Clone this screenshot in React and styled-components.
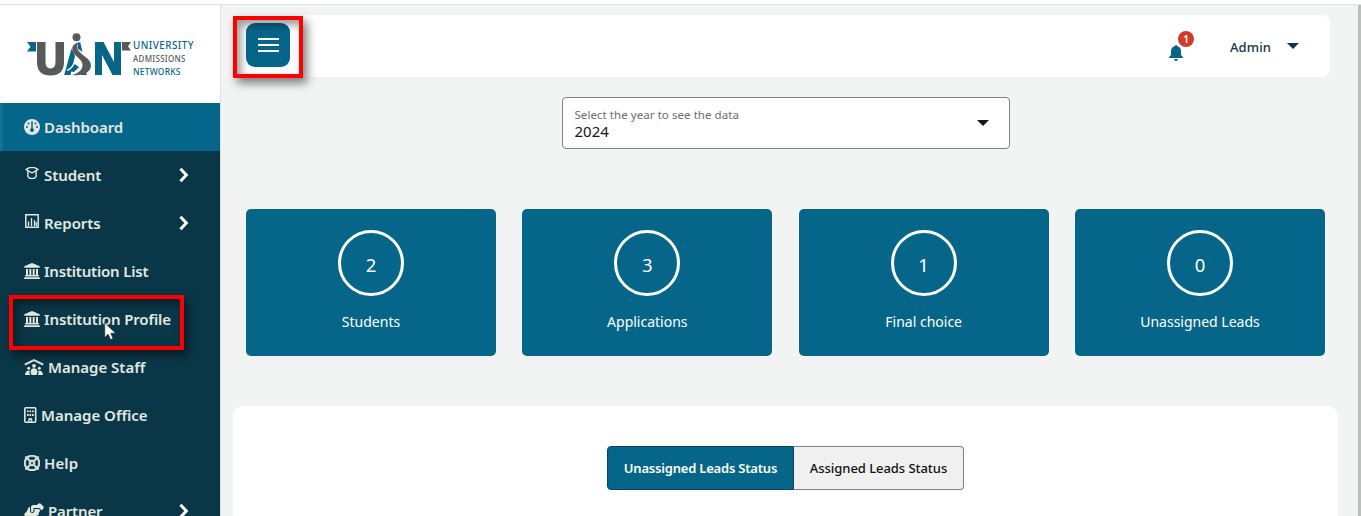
import React from "react";
import styled, { createGlobalStyle } from "styled-components";
import { FaGauge, FaRegLifeRing, FaHandshakeAngle } from "react-icons/fa6";

const teal = "#066689";
const navy = "#0a3747";

const GlobalStyle = createGlobalStyle`
  * { box-sizing: border-box; }
  body {
    margin: 0;
    overflow: hidden;
    font-family: "Noto Sans", "Open Sans", sans-serif;
    background: #f1f4f3;
  }
`;

const Page = styled.div`
  display: flex;
  flex-direction: column;
  height: 516px;
  overflow: hidden;
`;

const TopEdge = styled.div`
  flex: none;
  height: 5px;
  background: #fff;
  border-bottom: 1px solid #dfe1e1;
`;

const Body = styled.div`
  display: flex;
  flex: 1;
  min-height: 0;
`;

const Sidebar = styled.aside`
  flex: none;
  width: 221px;
  overflow: hidden;
  background: ${navy};
  border-right: 1px solid #dde1e1;
`;

const LogoArea = styled.div`
  display: flex;
  align-items: flex-start;
  height: 98px;
  padding: 26px 0 0 26px;
  background: #fff;
`;

const LogoWords = styled.div`
  display: flex;
  flex-direction: column;
  margin: 8px 0 0 1px;
  line-height: 13px;
  font-weight: 500;
`;

const LogoWord = styled.span`
  height: 13px;
  white-space: nowrap;
  color: ${(p) => p.$color};
  font-size: ${(p) => p.$size}px;
  letter-spacing: ${(p) => p.$spacing}px;
`;

const NavItem = styled.div`
  position: relative;
  display: flex;
  align-items: center;
  height: 48px;
  padding: 0 31px 0 ${(p) => (p.$active ? 21 : 24)}px;
  color: #e2e8e0;
  background: ${(p) => (p.$active ? teal : "transparent")};
  border-left: ${(p) => (p.$active ? "3px solid #0f739a" : "0")};
`;

const NavIcon = styled.span`
  display: flex;
  flex: none;
  margin-right: 4px;
  margin-top: ${(p) => p.$shift || 0}px;
  svg { display: block; }
`;

const NavLabel = styled.span`
  flex: 1;
  padding-bottom: 1px;
  font-size: 15px;
  line-height: 20px;
  font-weight: 600;
  white-space: nowrap;
  letter-spacing: ${(p) => p.$spacing}px;
`;

const Highlight = styled.div`
  position: absolute;
  z-index: 3;
  left: ${(p) => p.$left}px;
  top: ${(p) => p.$top}px;
  width: ${(p) => p.$width}px;
  height: ${(p) => p.$height}px;
  border: 4px solid #fe0000;
  box-shadow: 4px 5px 9px rgba(0, 0, 0, 0.5), inset 4px 5px 9px rgba(0, 0, 0, 0.4);
`;

const Pointer = styled.svg`
  position: absolute;
  z-index: 4;
  left: 104px;
  top: 27px;
`;

const Main = styled.main`
  flex: 1;
  min-width: 0;
  padding: 10px 20px 0 12px;
`;

const Header = styled.header`
  position: relative;
  display: flex;
  align-items: center;
  height: 62px;
  margin-right: 8px;
  padding: 0 31px 0 13px;
  background: #fff;
  border-radius: 8px;
`;

const MenuButton = styled.div`
  display: flex;
  flex-direction: column;
  justify-content: center;
  align-items: center;
  gap: 4px;
  width: 44px;
  height: 44px;
  margin-top: -2px;
  border-radius: 9px;
  background: ${teal};
`;

const MenuBar = styled.span`
  width: 21px;
  height: 2px;
  background: #fff;
`;

const Spacer = styled.div`
  flex: 1;
`;

const Bell = styled.div`
  position: relative;
  width: 14px;
  height: 16px;
  margin: 13px 47px 0 0;
  svg { display: block; }
`;

const Badge = styled.span`
  position: absolute;
  left: 9px;
  top: -14px;
  width: 16px;
  height: 16px;
  border-radius: 50%;
  background: #cf3b28;
  color: #fff;
  font-size: 10px;
  line-height: 16px;
  font-weight: 600;
  text-align: center;
`;

const UserName = styled.span`
  width: 57px;
  padding-top: 2px;
  font-size: 13px;
  line-height: 18px;
  font-weight: 500;
  color: #153846;
  letter-spacing: 0.1px;
`;

const Caret = styled.span`
  border-left: 6px solid transparent;
  border-right: 6px solid transparent;
  border-top: 6px solid ${(p) => p.$color};
`;

const YearSelect = styled.div`
  display: flex;
  align-items: center;
  justify-content: space-between;
  width: 448px;
  height: 52px;
  margin: 20px auto 0;
  padding: 0 20px 0 12px;
  background: #fff;
  border: 1px solid #7f8182;
  border-radius: 4px;
`;

const SelectText = styled.div`
  display: flex;
  flex-direction: column;
`;

const SelectLabel = styled.span`
  font-size: 11.5px;
  line-height: 15px;
  color: #6b6d6e;
  letter-spacing: 0.06px;
`;

const SelectValue = styled.span`
  font-size: 15px;
  line-height: 18px;
  color: #161616;
`;

const Cards = styled.section`
  display: grid;
  grid-template-columns: repeat(4, 250px);
  justify-content: space-between;
  margin: 60px 13px 0 13px;
`;

const Card = styled.div`
  display: flex;
  flex-direction: column;
  align-items: center;
  height: 147px;
  padding-top: 21px;
  color: #fff;
  background: ${teal};
  border-radius: 5px;
`;

const Count = styled.div`
  width: 66px;
  height: 66px;
  border: 3px solid #fff;
  border-radius: 50%;
  font-size: 18.5px;
  line-height: 64px;
  text-align: center;
`;

const CardLabel = styled.span`
  margin-top: 16px;
  font-size: 14px;
  line-height: 20px;
`;

const Panel = styled.section`
  display: flex;
  justify-content: center;
  align-items: flex-start;
  height: 130px;
  margin-top: 50px;
  padding-top: 40px;
  background: #fff;
  border-radius: 10px 10px 0 0;
`;

const Tab = styled.div`
  width: ${(p) => p.$width}px;
  height: 44px;
  border: 1px solid ${(p) => (p.$active ? "#064a62" : "#7f8182")};
  border-left-width: ${(p) => (p.$active ? 1 : 0)}px;
  border-radius: ${(p) => (p.$active ? "4px 0 0 4px" : "0 4px 4px 0")};
  background: ${(p) => (p.$active ? teal : "#f0f0f0")};
  color: ${(p) => (p.$active ? "#fff" : "#111")};
  font-size: 13px;
  font-weight: ${(p) => (p.$active ? 600 : 500)};
  line-height: 43px;
  text-align: center;
  white-space: nowrap;
  letter-spacing: ${(p) => p.$spacing}px;
`;

const ScrollEdge = styled.div`
  flex: none;
  width: 3px;
  background: #bcbeb9;
`;

function LogoMark() {
  return (
    <svg width="106" height="46" viewBox="26 31 106 46">
      <path d="M27 42h9v9.500h-9l3.500-4.700z" fill={teal} />
      <path d="M37 42h8.500v19.500q0 7 5 7t5-7V42H64v20q0 13.500-13.500 13.500T37 62z" fill="#58595b" />
      <path d="M71.500 48.500l3.500 7.500-4.500 19h-6.300z" fill={teal} />
      <path d="M78 42.500h2.300l2.200 9.500-5-3.500z" fill={teal} />
      <path d="M73 63l6 4-5 5-5-1z" fill={teal} />
      <path d="M80 75l6-3.500.8 3.500z" fill={teal} />
      <circle cx="76.500" cy="37.200" r="4" fill="#58595b" />
      <path d="M79 42.500c-5 .5-7.500 4-6.500 8 1.200 5.500 9.500 8 10 14 .3 5-3.500 8.500-10.500 10.500 11 1.500 19-3 19-9.500 0-7.500-11-10.500-13.500-16.500-1-2.500-.5-4.500 1.500-6.500z" fill="#58595b" />
      <path d="M67 70.500q6-2 8.500-11" fill="none" stroke="#fff" strokeWidth="1.300" />
      <path d="M95 42h8.500l10.500 20V42h7v33h-8.500l-10.500-20v20h-7z" fill={teal} />
      <path d="M122 42h9l-3 4.200 3 4.300h-9z" fill="#58595b" />
    </svg>
  );
}

function CapIcon() {
  return (
    <svg width="16" height="14" viewBox="0 0 16 14" fill="none" stroke="currentColor" strokeWidth="1.400" strokeLinejoin="round">
      <path d="M2 3.300L5.500 1.600h5L14 3.300 10.500 5.600 8 6.800 5.500 5.600z" />
      <path d="M3.900 4.800v5.700l2 1.900h4.200l2-1.900V4.800" />
    </svg>
  );
}

function ReportIcon() {
  return (
    <svg width="16" height="16" viewBox="0 0 16 16" fill="none" stroke="currentColor" strokeWidth="1.500">
      <path d="M1.800 1.800h12.400v12.400H1.800z" />
      <path d="M4.500 8.500V13M7.500 5v8M10.500 7v6M12.300 9v4" strokeWidth="1.300" />
    </svg>
  );
}

function InstitutionIcon() {
  return (
    <svg width="16" height="16" viewBox="0 0 16 16" fill="currentColor">
      <path d="M8 0l7.700 3.200v1.500H.3V3.200z" />
      <path d="M2 6h2v6H2zM5.300 6h2v6h-2zM8.700 6h2v6h-2zM12 6h2v6h-2zM1.200 12h13.600v1.500H1.200zM.2 14.200h15.600V16H.2z" />
    </svg>
  );
}

function StaffIcon() {
  return (
    <svg width="20" height="16" viewBox="0 0 20 16" fill="currentColor">
      <path d="M.8 5.600L10 1.200l9.200 4.400" fill="none" stroke="currentColor" strokeWidth="2" />
      <circle cx="10" cy="6.800" r="1.900" />
      <circle cx="4.700" cy="9.200" r="1.500" />
      <circle cx="15.300" cy="9.200" r="1.500" />
      <path d="M6.500 13q.5-3.700 3.500-3.700t3.500 3.700l-1 3h-5zM1 16q.3-4.300 3.700-4.300 1 0 1.300.4l-.7 1.700 1 2.200zM19 16q-.3-4.300-3.700-4.300-1 0-1.300.4l.7 1.700-1 2.200z" />
    </svg>
  );
}

function OfficeIcon() {
  return (
    <svg width="13" height="16" viewBox="0 0 13 16">
      <rect x=".8" y=".8" width="10.900" height="14.400" rx="1" fill="none" stroke="currentColor" strokeWidth="1.600" />
      <path d="M3 3.400h1.700v1.900H3zM5.500 3.400h1.700v1.900H5.500zM8 3.400h1.700v1.900H8zM3 7h1.700v1.900H3zM5.500 7h1.700v1.900H5.500zM8 7h1.700v1.900H8zM4.300 15.500v-3.300q0-1.300 2-1.300t2 1.300v3.300H6.900v-2.700H5.700v2.700z" fill="currentColor" />
    </svg>
  );
}

function Chevron() {
  return (
    <svg width="10" height="16" viewBox="0 0 10 16">
      <path d="M1.500 1.800L7.300 8l-5.800 6.200" fill="none" stroke="#fff" strokeWidth="3" />
    </svg>
  );
}

function BellIcon() {
  return (
    <svg width="14" height="16" viewBox="0 0 14 16" fill={teal}>
      <path d="M7 0q1 0 1 1.100C11 1.700 12 4 12 6.500V10l2 2.300V13H0v-.7L2 10V6.500C2 4 3 1.700 6 1.100Q6 0 7 0zM5 14h4q-.3 2-2 2t-2-2z" />
    </svg>
  );
}

const navItems = [
  { label: "Dashboard", icon: <FaGauge size={16} />, active: true, spacing: -0.06 },
  { label: "Student", icon: <CapIcon />, shift: -4, arrow: true, spacing: -0.05 },
  { label: "Reports", icon: <ReportIcon />, shift: -5, arrow: true, spacing: -0.05 },
  { label: "Institution List", icon: <InstitutionIcon />, spacing: -0.2 },
  { label: "Institution Profile", icon: <InstitutionIcon />, marked: true, spacing: -0.12 },
  { label: "Manage Staff", icon: <StaffIcon />, spacing: 0 },
  { label: "Manage Office", icon: <OfficeIcon />, spacing: 0 },
  { label: "Help", icon: <FaRegLifeRing size={16} stroke="currentColor" strokeWidth={22} />, spacing: 0.1 },
  { label: "Partner", icon: <FaHandshakeAngle style={{ width: 20, height: 16 }} />, arrow: true, spacing: -0.15 },
];

const cards = [
  ["2", "Students"],
  ["3", "Applications"],
  ["1", "Final choice"],
  ["0", "Unassigned Leads"],
];

export default function App() {
  return (
    <Page>
      <GlobalStyle />
      <TopEdge />
      <Body>
        <Sidebar>
          <LogoArea>
            <LogoMark />
            <LogoWords>
              <LogoWord $color={teal} $size={9.8} $spacing={0.5}>UNIVERSITY</LogoWord>
              <LogoWord $color="#58595b" $size={8} $spacing={0.3}>ADMISSIONS</LogoWord>
              <LogoWord $color={teal} $size={8.5} $spacing={0.2}>NETWORKS</LogoWord>
            </LogoWords>
          </LogoArea>
          {navItems.map((item) => (
            <NavItem key={item.label} $active={item.active}>
              <NavIcon $shift={item.shift}>{item.icon}</NavIcon>
              <NavLabel $spacing={item.spacing}>{item.label}</NavLabel>
              {item.arrow && <Chevron />}
              {item.marked && (
                <>
                  <Highlight $left={9} $top={0} $width={175} $height={55} />
                  <Pointer width="13" height="19" viewBox="0 0 13 19">
                    <path d="M.7.700v14.800l3.500-3.200 2.300 5.300 2.600-1.100-2.300-5.200h4.900z" fill="#fff" stroke="#222" strokeWidth=".7" />
                  </Pointer>
                </>
              )}
            </NavItem>
          ))}
        </Sidebar>
        <Main>
          <Header>
            <MenuButton>
              <MenuBar />
              <MenuBar />
              <MenuBar />
            </MenuButton>
            <Highlight $left={0} $top={1} $width={70} $height={62} />
            <Spacer />
            <Bell>
              <BellIcon />
              <Badge>1</Badge>
            </Bell>
            <UserName>Admin</UserName>
            <Caret $color={navy} />
          </Header>
          <YearSelect>
            <SelectText>
              <SelectLabel>Select the year to see the data</SelectLabel>
              <SelectValue>2024</SelectValue>
            </SelectText>
            <Caret $color="#161616" />
          </YearSelect>
          <Cards>
            {cards.map(([count, label]) => (
              <Card key={label}>
                <Count>{count}</Count>
                <CardLabel>{label}</CardLabel>
              </Card>
            ))}
          </Cards>
          <Panel>
            <Tab $active $width={187} $spacing={-0.2}>Unassigned Leads Status</Tab>
            <Tab $width={170} $spacing={-0.05}>Assigned Leads Status</Tab>
          </Panel>
        </Main>
        <ScrollEdge />
      </Body>
    </Page>
  );
}
